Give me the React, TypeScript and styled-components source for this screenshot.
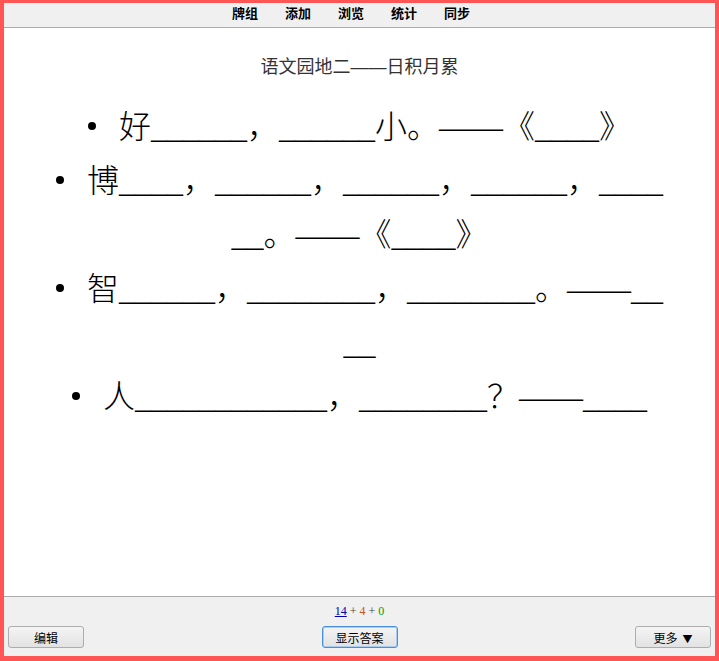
import React from "react"
import styled, { createGlobalStyle } from "styled-components"

const GlobalStyle = createGlobalStyle`
  html, body, #root {
    height: 100%;
    margin: 0;
  }
  body {
    overflow: hidden;
    background: #ffffff;
    font-family: "Noto Sans CJK SC", sans-serif;
  }
`

const Page = styled.div`
  height: 100%;
  display: flex;
  flex-direction: column;
  position: relative;
`

// red frame drawn over the whole window
const Frame = styled.div`
  position: absolute;
  inset: 0;
  border: 4px solid #ff5555;
  border-top-width: 3px;
  border-bottom-width: 5px;
  pointer-events: none;
`

const TopBar = styled.nav`
  height: 27px;
  flex-shrink: 0;
  background: #f0f0f0;
  border-bottom: 1px solid #ababab;
  display: flex;
  justify-content: center;
  align-items: center;
  gap: 27px;
  padding-right: 17px;
`

const NavLink = styled.a`
  font-family: "Noto Sans CJK SC", sans-serif;
  font-size: 13px;
  font-weight: 700;
  line-height: 16px;
  margin-top: -2px;
  color: #000;
  text-decoration: none;
  cursor: pointer;
`

const Card = styled.main`
  flex: 1;
  background: #fff;
  overflow: hidden;
  padding-top: 26px;
`

const Title = styled.div`
  font-family: "Liberation Sans", "Noto Sans CJK SC", sans-serif;
  font-size: 18px;
  line-height: 26px;
  color: #333;
  text-align: center;
`

const List = styled.ul`
  width: 615px;
  margin: 20px auto 0;
  padding: 0;
  list-style: none;
  text-align: center;
  word-break: break-all;
  font-family: "Liberation Serif", "Noto Sans CJK SC", serif;
  font-size: 32px;
  font-weight: 300;
  line-height: 54px;
  color: #000;
`

const Item = styled.li`
  &::before {
    content: "";
    display: inline-block;
    width: 8px;
    height: 8px;
    border-radius: 50%;
    background: #000;
    margin-right: 23px;
    vertical-align: 8px;
  }
`

const BottomBar = styled.footer`
  height: 58px;
  flex-shrink: 0;
  background: #f0f0f0;
  border-top: 1px solid #ababab;
  padding: 6px 8px 0;
`

const Counts = styled.div`
  font-family: "Liberation Serif", serif;
  font-size: 12px;
  line-height: 16px;
  text-align: center;
  color: #444;
`

const Count = styled.span<{ $color: string; $current?: boolean }>`
  color: ${(p) => p.$color};
  text-decoration: ${(p) => (p.$current ? "underline" : "none")};
`

const ButtonRow = styled.div`
  margin-top: 7px;
  display: grid;
  grid-template-columns: 1fr auto 1fr;
  align-items: center;
`

const Button = styled.button<{ $focused?: boolean; $align: "start" | "center" | "end" }>`
  justify-self: ${(p) => p.$align};
  width: 76px;
  height: 22px;
  padding: 0;
  font-family: "Noto Sans CJK SC", sans-serif;
  font-size: 12px;
  color: #000;
  background: linear-gradient(#f4f4f4, #e2e2e2);
  border: 1px solid ${(p) => (p.$focused ? "#4a90d9" : "#adadad")};
  box-shadow: ${(p) => (p.$focused ? "inset 0 0 0 1px #a8cdf2" : "none")};
  border-radius: 3px;
  cursor: pointer;
`

const Arrow = styled.span`
  font-size: 10px;
  margin-left: 5px;
`

const lines = [
  "好______，______小。——《____》",
  "博____，______，______，______，______。——《____》",
  "智______，________，________。——____",
  "人____________，________？——____",
]

export default function App() {
  return (
    <Page>
      <GlobalStyle />
      <TopBar>
        <NavLink>牌组</NavLink>
        <NavLink>添加</NavLink>
        <NavLink>浏览</NavLink>
        <NavLink>统计</NavLink>
        <NavLink>同步</NavLink>
      </TopBar>
      <Card>
        <Title>语文园地二——日积月累</Title>
        <List>
          {lines.map((line, index) => (
            <Item key={index}>{line}</Item>
          ))}
        </List>
      </Card>
      <BottomBar>
        <Counts>
          <Count $color="#0000aa" $current>14</Count>
          {" + "}
          <Count $color="#c35617">4</Count>
          {" + "}
          <Count $color="#00a000">0</Count>
        </Counts>
        <ButtonRow>
          <Button $align="start">编辑</Button>
          <Button $align="center" $focused>显示答案</Button>
          <Button $align="end">
            更多<Arrow>▼</Arrow>
          </Button>
        </ButtonRow>
      </BottomBar>
      <Frame />
    </Page>
  )
}
